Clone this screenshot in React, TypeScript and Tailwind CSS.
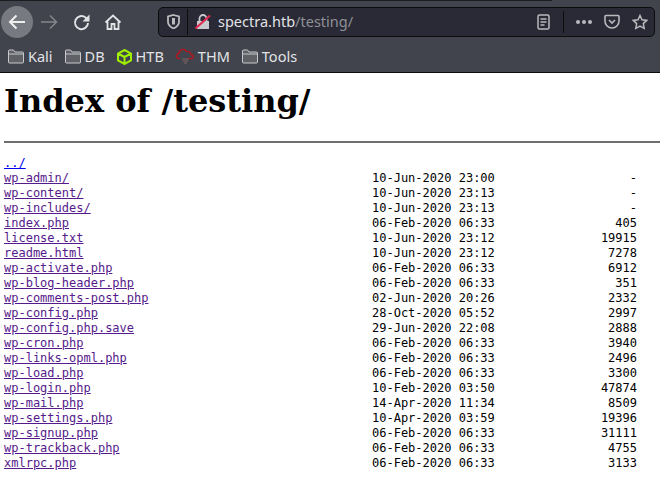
import React from 'react';

const entries = [
  ['wp-admin/', '10-Jun-2020 23:00', '-'],
  ['wp-content/', '10-Jun-2020 23:13', '-'],
  ['wp-includes/', '10-Jun-2020 23:13', '-'],
  ['index.php', '06-Feb-2020 06:33', '405'],
  ['license.txt', '10-Jun-2020 23:12', '19915'],
  ['readme.html', '10-Jun-2020 23:12', '7278'],
  ['wp-activate.php', '06-Feb-2020 06:33', '6912'],
  ['wp-blog-header.php', '06-Feb-2020 06:33', '351'],
  ['wp-comments-post.php', '02-Jun-2020 20:26', '2332'],
  ['wp-config.php', '28-Oct-2020 05:52', '2997'],
  ['wp-config.php.save', '29-Jun-2020 22:08', '2888'],
  ['wp-cron.php', '06-Feb-2020 06:33', '3940'],
  ['wp-links-opml.php', '06-Feb-2020 06:33', '2496'],
  ['wp-load.php', '06-Feb-2020 06:33', '3300'],
  ['wp-login.php', '10-Feb-2020 03:50', '47874'],
  ['wp-mail.php', '14-Apr-2020 11:34', '8509'],
  ['wp-settings.php', '10-Apr-2020 03:59', '19396'],
  ['wp-signup.php', '06-Feb-2020 06:33', '31111'],
  ['wp-trackback.php', '06-Feb-2020 06:33', '4755'],
  ['xmlrpc.php', '06-Feb-2020 06:33', '3133'],
];

function FolderIcon() {
  return (
    <svg width="16" height="15" viewBox="0 0 16 15" fill="#5f6166" stroke="#c8c9cc" strokeWidth="1">
      <path d="M0.5 13V2a1 1 0 0 1 1-1h4l1.500 2h7.500a1 1 0 0 1 1 1v9a1 1 0 0 1-1 1h-13a1 1 0 0 1-1-1z" />
      <path d="M0.500 5h15" fill="none" />
    </svg>
  );
}

function Bookmark({ icon, label }: { icon: React.ReactNode; label: string }) {
  return (
    <div className="flex items-center gap-[4px]">
      {icon}
      <span>{label}</span>
    </div>
  );
}

export default function App() {
  return (
    <div className="h-[477px] w-[660px] overflow-hidden bg-white">
      <div className="h-[73px] border-b border-[#0c0c0d] bg-[#41444c] font-['Noto_Sans',sans-serif] text-[#e2e3e6]">
        {/* Edge of the tab strip */}
        <div className="h-px w-[552px] bg-[#1c1d21]" />
        {/* Navigation bar */}
        <div className="flex h-[41px] items-center">
          <div className="ml-[1px] flex h-[32px] w-[32px] shrink-0 items-center justify-center rounded-full bg-[#777a80]">
            <svg width="18" height="18" viewBox="0 0 18 18" fill="none" stroke="#eeeeef" strokeWidth="2">
              <path d="M17 9H2M8.500 2.500 2 9l6.500 6.500" />
            </svg>
          </div>
          <svg className="ml-[7px]" width="18" height="18" viewBox="0 0 18 18" fill="none" stroke="#85878c" strokeWidth="1.500">
            <path d="M1 9h15M10 2.500 16.500 9 10 15.500" />
          </svg>
          <svg className="ml-[15px]" width="18" height="18" viewBox="0 0 18 18" fill="none" stroke="#e2e3e6" strokeWidth="2">
            <path d="M15 10a6.500 6.500 0 1 1-2.500-5.500L15 7" />
            <path d="M16.500 1.500v7h-7z" fill="#e2e3e6" stroke="none" />
          </svg>
          <svg className="ml-[13px]" width="18" height="18" viewBox="0 0 18 18" fill="none" stroke="#e2e3e6" strokeWidth="1.800">
            <path d="M1.500 9.500 9 2.500l7.500 7M3.500 8v8h4v-5h3v5h4V8" />
          </svg>
          <div className="ml-[36px] flex h-[30px] w-[497px] shrink-0 items-center rounded-[5px] border border-[#0c0c0d] bg-[#2a2a37]">
            <svg className="ml-[8px]" width="13" height="15" viewBox="0 0 13 15" fill="none" stroke="#b9babd" strokeWidth="1.800">
              <path d="M6.500 1 12 2.500V8c0 3-2.500 5-5.500 6.500C3.500 13 1 11 1 8V2.500z" />
              <path d="M6.500 4v6.500" strokeWidth="3" />
            </svg>
            <div className="ml-[7px] h-[26px] w-px bg-[#0c0c0d]" />
            <svg className="ml-[7px]" width="16" height="16" viewBox="0 0 16 16">
              <path d="M2 7h12v8H2z" fill="#c9cacd" />
              <path d="M4.500 7V4.500a3.500 3.500 0 0 1 7 0V7" fill="none" stroke="#c9cacd" strokeWidth="1.800" />
              <path d="M0.500 14.500 15 1.500" stroke="#e22850" strokeWidth="2" />
            </svg>
            <div className="ml-[7px] text-[14.5px] leading-none">
              spectra.htb<span className="text-[#8f9095]">/testing/</span>
            </div>
            <svg className="ml-auto" width="13" height="16" viewBox="0 0 13 16" fill="none" stroke="#b9babd" strokeWidth="1.500">
              <rect x="1" y="1" width="11" height="14" rx="1.500" />
              <path d="M3.500 5h6M3.500 8h6M3.500 11h4" />
            </svg>
            <div className="ml-[13px] h-[22px] w-px bg-[#0c0c0d]" />
            <div className="ml-[12px] flex gap-[2px]">
              <div className="h-[4px] w-[4px] rounded-full bg-[#b9babd]" />
              <div className="h-[4px] w-[4px] rounded-full bg-[#b9babd]" />
              <div className="h-[4px] w-[4px] rounded-full bg-[#b9babd]" />
            </div>
            <svg className="ml-[12px]" width="16" height="15" viewBox="0 0 16 15" fill="none" stroke="#b9babd" strokeWidth="1.600">
              <path d="M1 2.500a1 1 0 0 1 1-1h12a1 1 0 0 1 1 1V7a7 7 0 0 1-14 0z" />
              <path d="M5 6l3 3 3-3" />
            </svg>
            <svg className="ml-[12px] mr-[6px]" width="16" height="16" viewBox="0 0 16 16" fill="none" stroke="#b9babd" strokeWidth="1.500">
              <path d="M8 1.500l2 4.300 4.700.6-3.400 3.200.9 4.700L8 12l-4.200 2.300.9-4.700L1.300 6.400 6 5.800z" />
            </svg>
          </div>
        </div>
        {/* Bookmarks bar */}
        <div className="flex h-[29px] items-center gap-[12px] pl-[8px] text-[14.5px] leading-none">
          <Bookmark icon={<FolderIcon />} label="Kali" />
          <Bookmark icon={<FolderIcon />} label="DB" />
          <Bookmark
            icon={
              <svg width="15" height="16" viewBox="0 0 15 16" fill="none" stroke="#9fef00" strokeWidth="2">
                <path d="M7.500 1 14 4.500v7L7.500 15 1 11.500v-7zM1 4.500 7.500 8 14 4.500M7.500 8v7" />
              </svg>
            }
            label="HTB"
          />
          <Bookmark
            icon={
              <svg width="18" height="17" viewBox="0 0 18 17" fill="none" stroke="#b5161e" strokeWidth="1.300">
                <path d="M4 10.500H3a2.500 2.500 0 0 1 0-5 4 4 0 0 1 7.500-2A3.500 3.500 0 0 1 15 7a1.800 1.800 0 0 1 1 3.500h-4" />
                <path d="M6 11h7M7 13h5M8 15h3" stroke="#6b5a5c" />
              </svg>
            }
            label="THM"
          />
          <Bookmark icon={<FolderIcon />} label="Tools" />
        </div>
      </div>
      {/* Directory listing */}
      <div className="pl-[4px] font-['DejaVu_Serif',serif] text-black">
        <h1 className="mt-[9px] text-[32px] font-bold leading-[38px]">Index of /testing/</h1>
        <hr className="mt-[21px] border-t-2 border-[#6e6e6e]" />
        <div className="mt-[13px] font-['DejaVu_Sans_Mono',monospace] text-[12px] leading-[15px]">
          <div>
            <a href="#" className="text-[#0000ee] underline">../</a>
          </div>
          {entries.map(([name, date, size]) => (
            <div key={name} className="flex">
              <a href="#" className="w-[368px] text-[#551a8b] underline">{name}</a>
              <span className="w-[180px]">{date}</span>
              <span className="w-[85px] text-right">{size}</span>
            </div>
          ))}
        </div>
      </div>
    </div>
  );
}
